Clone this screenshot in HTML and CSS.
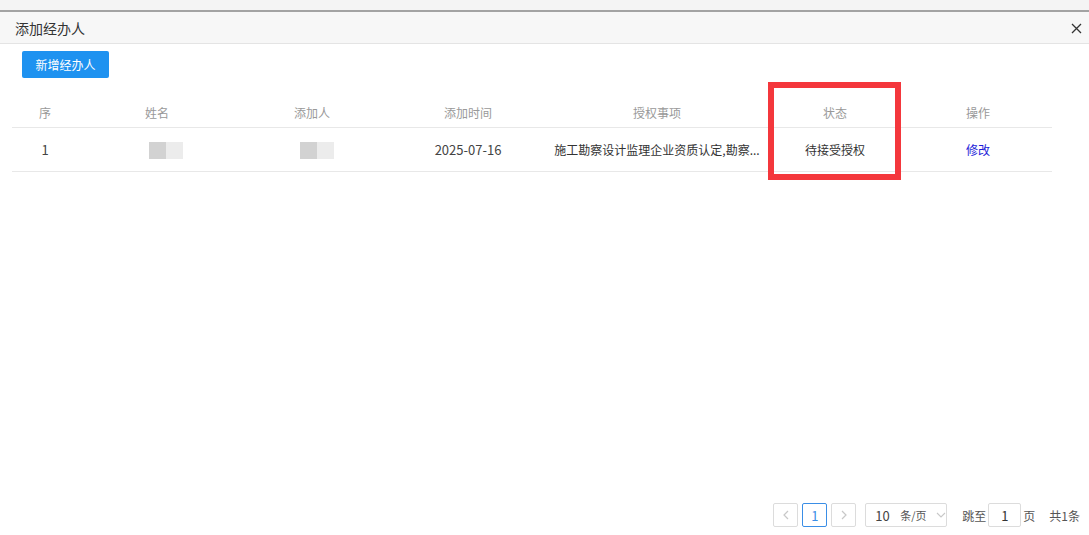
FILE: index.html
```html
<!DOCTYPE html>
<html lang="zh-CN">

<head>
    <meta charset="UTF-8">
    <meta name="viewport" content="width=device-width, initial-scale=1.0">
    <title>添加经办人</title>
    <link rel="stylesheet" href="styles.css">
</head>

<body>
    <div class="backdrop-strip"></div>

    <div class="dialog">
        <div class="dialog-header">
            <span class="dialog-title">添加经办人</span>
            <span class="dialog-close">
                <svg width="11" height="11" viewBox="0 0 11 11">
                    <path d="M1 1 L10 10 M10 1 L1 10" stroke="#333" stroke-width="1.3" fill="none" />
                </svg>
            </span>
        </div>

        <div class="dialog-body">
            <button class="btn-primary">新增经办人</button>

            <div class="table-wrap">
                <table class="agent-table">
                    <colgroup>
                        <col style="width: 66px">
                        <col style="width: 158px">
                        <col style="width: 152px">
                        <col style="width: 160px">
                        <col style="width: 218px">
                        <col style="width: 138px">
                        <col style="width: 148px">
                    </colgroup>
                    <thead>
                        <tr>
                            <th>序</th>
                            <th>姓名</th>
                            <th>添加人</th>
                            <th>添加时间</th>
                            <th>授权事项</th>
                            <th>状态</th>
                            <th>操作</th>
                        </tr>
                    </thead>
                    <tbody>
                        <tr>
                            <td class="num">1</td>
                            <td><span class="masked name"></span></td>
                            <td><span class="masked adder"></span></td>
                            <td class="num">2025-07-16</td>
                            <td>施工勘察设计监理企业资质认定,勘察...</td>
                            <td>待接受授权</td>
                            <td><a class="link" href="#">修改</a></td>
                        </tr>
                    </tbody>
                </table>
                <!-- annotation box drawn over the status column -->
                <div class="highlight-box"></div>
            </div>
        </div>

        <div class="pager">
            <span class="pager-btn disabled">
                <svg width="8" height="10" viewBox="0 0 8 10">
                    <path d="M6 1 L2 5 L6 9" stroke="#c8c8c8" stroke-width="1.2" fill="none" />
                </svg>
            </span>
            <span class="pager-btn active">1</span>
            <span class="pager-btn disabled">
                <svg width="8" height="10" viewBox="0 0 8 10">
                    <path d="M2 1 L6 5 L2 9" stroke="#c8c8c8" stroke-width="1.2" fill="none" />
                </svg>
            </span>
            <span class="page-size">
                <span class="size-num">10</span>
                <span class="size-unit">条/页</span>
                <svg width="10" height="6" viewBox="0 0 10 6">
                    <path d="M1 1 L5 5 L9 1" stroke="#c8c8c8" stroke-width="1.1" fill="none" />
                </svg>
            </span>
            <span class="jump">跳至</span>
            <span class="jump-input">1</span>
            <span class="jump">页</span>
            <span class="total">共1条</span>
        </div>
    </div>
</body>

</html>
```

FILE: styles.css
```css
html,
body {
    margin: 0;
    height: 100%;
}

body {
    font-family: "Microsoft YaHei", "Noto Sans CJK SC", sans-serif;
    color: #333;
    background: #fff;
    display: flex;
    flex-direction: column;
}

.backdrop-strip {
    height: 10px;
    background: #f4f4f4;
    border-bottom: 2px solid #a3a3a3;
}

.dialog {
    flex: 1;
    display: flex;
    flex-direction: column;
}

.dialog-header {
    height: 31px;
    background: #f7f7f7;
    border-bottom: 1px solid #e4e4e4;
    display: flex;
    align-items: center;
    justify-content: space-between;
    padding: 0 7px 0 15px;
}

.dialog-title {
    font-size: 14px;
    color: #333;
}

.dialog-close {
    display: flex;
    width: 11px;
    height: 11px;
    margin-top: 2px;
}

.dialog-body {
    flex: 1;
    padding: 7px 0 0 0;
}

.btn-primary {
    margin-left: 22px;
    width: 87px;
    height: 27px;
    padding: 0;
    border: none;
    border-radius: 2px;
    background: #1e92f0;
    color: #fff;
    font-family: inherit;
    font-size: 12px;
    cursor: pointer;
}

.table-wrap {
    position: relative;
    width: 1040px;
    margin: 19px 0 0 12px;
}

.agent-table {
    width: 1040px;
    table-layout: fixed;
    border-collapse: collapse;
}

.agent-table th {
    height: 30px;
    padding: 0;
    font-size: 12px;
    font-weight: normal;
    color: #999;
    text-align: center;
    border-bottom: 1px solid #e8e8e8;
}

.agent-table td {
    height: 43px;
    padding: 0;
    font-size: 12px;
    color: #333;
    text-align: center;
    white-space: nowrap;
    overflow: hidden;
    border-bottom: 1px solid #e8e8e8;
}

.agent-table td.num {
    font-size: 13px;
    color: #444;
}

.masked {
    display: inline-block;
    width: 34px;
    height: 17px;
    vertical-align: middle;
    background: linear-gradient(to right, #d2d2d2 50%, #ececec 50%);
}

.masked.name {
    margin-left: 17px;
}

.masked.adder {
    margin-left: 10px;
}

.link {
    color: #1d1dd8;
    text-decoration: none;
}

.highlight-box {
    position: absolute;
    left: 756px;
    top: -15px;
    width: 133px;
    height: 98px;
    box-sizing: border-box;
    border: 6px solid #f4373c;
}

.pager {
    display: flex;
    align-items: center;
    justify-content: flex-end;
    gap: 4px;
    padding: 0 9px 8px 0;
    font-size: 12px;
    color: #555;
}

.pager-btn {
    width: 23px;
    height: 22px;
    border: 1px solid #dcdcdc;
    border-radius: 2px;
    display: flex;
    align-items: center;
    justify-content: center;
    font-size: 13px;
    box-sizing: content-box;
}

.pager-btn.active {
    border-color: #3a8ee6;
    color: #3a8ee6;
}

.page-size {
    margin-left: 5px;
    width: 82px;
    height: 24px;
    border: 1px solid #dcdcdc;
    border-radius: 2px;
    display: flex;
    align-items: center;
    padding: 0 0 0 9px;
    box-sizing: border-box;
}

.size-num {
    font-size: 13px;
    color: #444;
    width: 25px;
}

.size-unit {
    font-size: 11px;
    color: #555;
    width: 36px;
}

.jump {
    margin-left: 11px;
}

.jump + .jump-input {
    margin-left: -2px;
}

.jump-input {
    width: 33px;
    height: 24px;
    border: 1px solid #dcdcdc;
    border-radius: 2px;
    box-sizing: border-box;
    display: flex;
    align-items: center;
    justify-content: center;
    font-size: 13px;
    color: #333;
}

.jump-input + .jump {
    margin-left: -2px;
}

.total {
    margin-left: 10px;
}
```
